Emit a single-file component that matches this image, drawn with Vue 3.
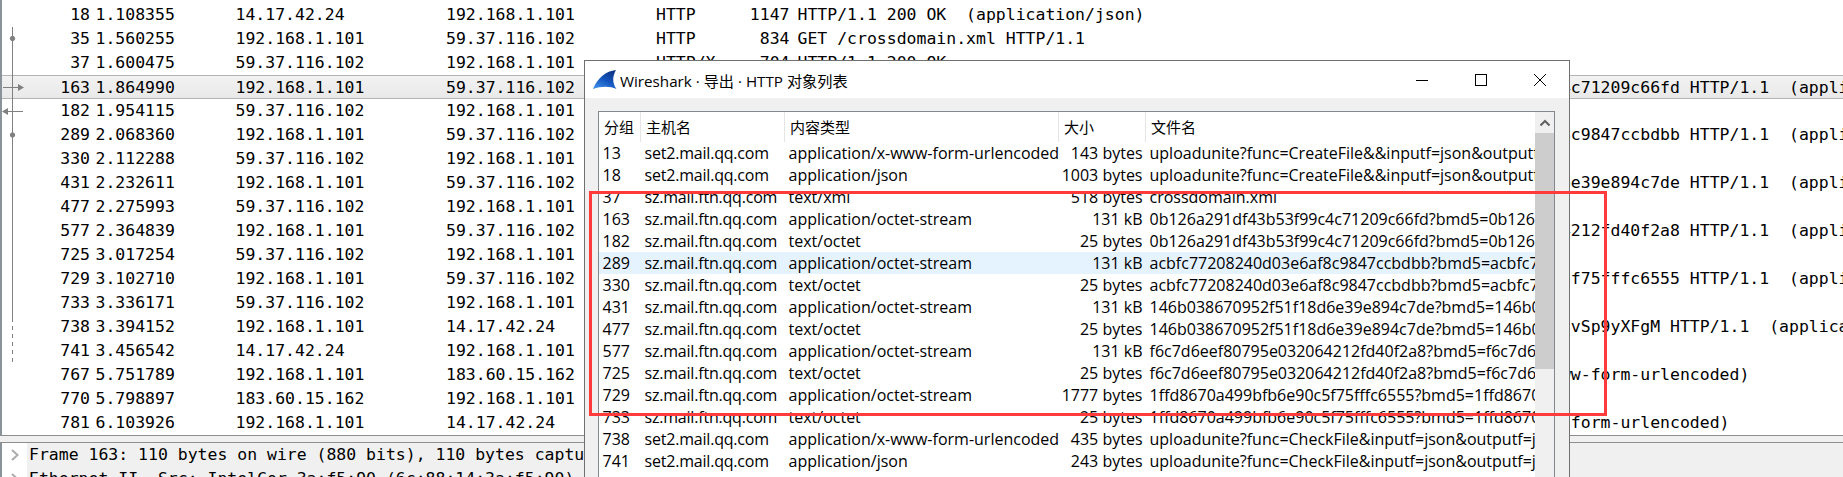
<script setup>
const OCT = '  (application/octet-stream)'
const post = (hash, n = 89) => ('POST /ftn_handler/'.padEnd(n - hash.length, ' ') + hash + ' HTTP/1.1' + OCT)
const ok = 'HTTP/1.1 200 OK'
const A = '192.168.1.101'
const Q = '59.37.116.102'
const T = '14.17.42.24'
const C = '183.60.15.162'
const packets = [
  { no: 18, t: '1.108355', s: T, d: A, p: 'HTTP', l: 1147, i: ok + '  (application/json)' },
  { no: 35, t: '1.560255', s: A, d: Q, p: 'HTTP', l: 834, i: 'GET /crossdomain.xml HTTP/1.1' },
  { no: 37, t: '1.600475', s: Q, d: A, p: 'HTTP/X', l: 704, i: ok },
  { no: 163, t: '1.864990', s: A, d: Q, p: 'HTTP', l: 110, i: post('0b126a291df43b53f99c4c71209c66fd'), sel: true },
  { no: 182, t: '1.954115', s: Q, d: A, p: 'HTTP', l: 350, i: ok },
  { no: 289, t: '2.068360', s: A, d: Q, p: 'HTTP', l: 110, i: post('acbfc77208240d03e6af8c9847ccbdbb') },
  { no: 330, t: '2.112288', s: Q, d: A, p: 'HTTP', l: 350, i: ok },
  { no: 431, t: '2.232611', s: A, d: Q, p: 'HTTP', l: 110, i: post('146b038670952f51f18d6e39e894c7de') },
  { no: 477, t: '2.275993', s: Q, d: A, p: 'HTTP', l: 350, i: ok },
  { no: 577, t: '2.364839', s: A, d: Q, p: 'HTTP', l: 110, i: post('f6c7d6eef80795e032064212fd40f2a8') },
  { no: 725, t: '3.017254', s: Q, d: A, p: 'HTTP', l: 350, i: ok },
  { no: 729, t: '3.102710', s: A, d: Q, p: 'HTTP', l: 110, i: post('1ffd8670a499bfb6e90c5f75fffc6555') },
  { no: 733, t: '3.336171', s: Q, d: A, p: 'HTTP', l: 350, i: ok },
  { no: 738, t: '3.394152', s: A, d: T, p: 'HTTP', l: 650, i: post('vSp9yXFgM', 87).replace('octet-stream', 'json') },
  { no: 741, t: '3.456542', s: T, d: A, p: 'HTTP', l: 400, i: ok },
  { no: 767, t: '5.751789', s: A, d: C, p: 'HTTP', l: 600, i: 'POST /cgi-bin/upload HTTP/1.1  (application/x-www-form-urlencoded)'.padStart(96, ' ') },
  { no: 770, t: '5.798897', s: C, d: A, p: 'HTTP', l: 400, i: ok },
  { no: 781, t: '6.103926', s: A, d: T, p: 'HTTP', l: 700, i: 'POST /cgi-bin/upload HTTP/1.1  (application/x-www-form-urlencoded)'.padStart(94, ' ') }
]

const SET = 'set2.mail.qq.com'
const FTN = 'sz.mail.ftn.qq.com'
const OS = 'application/octet-stream'
const TO = 'text/octet'
const FORM = 'application/x-www-form-urlencoded'
const JSONT = 'application/json'
const file = (h) => `${h}?bmd5=${h}`
const objects = [
  { no: 13, h: SET, c: FORM, z: '143 bytes', f: 'uploadunite?func=CreateFile&&inputf=json&outputf=json&sid=a' },
  { no: 18, h: SET, c: JSONT, z: '1003 bytes', f: 'uploadunite?func=CreateFile&&inputf=json&outputf=json&sid=a' },
  { no: 37, h: FTN, c: 'text/xml', z: '518 bytes', f: 'crossdomain.xml' },
  { no: 163, h: FTN, c: OS, z: '131 kB', f: file('0b126a291df43b53f99c4c71209c66fd') },
  { no: 182, h: FTN, c: TO, z: '25 bytes', f: file('0b126a291df43b53f99c4c71209c66fd') },
  { no: 289, h: FTN, c: OS, z: '131 kB', f: file('acbfc77208240d03e6af8c9847ccbdbb'), sel: true },
  { no: 330, h: FTN, c: TO, z: '25 bytes', f: file('acbfc77208240d03e6af8c9847ccbdbb') },
  { no: 431, h: FTN, c: OS, z: '131 kB', f: file('146b038670952f51f18d6e39e894c7de') },
  { no: 477, h: FTN, c: TO, z: '25 bytes', f: file('146b038670952f51f18d6e39e894c7de') },
  { no: 577, h: FTN, c: OS, z: '131 kB', f: file('f6c7d6eef80795e032064212fd40f2a8') },
  { no: 725, h: FTN, c: TO, z: '25 bytes', f: file('f6c7d6eef80795e032064212fd40f2a8') },
  { no: 729, h: FTN, c: OS, z: '1777 bytes', f: file('1ffd8670a499bfb6e90c5f75fffc6555') },
  { no: 733, h: FTN, c: TO, z: '25 bytes', f: file('1ffd8670a499bfb6e90c5f75fffc6555') },
  { no: 738, h: SET, c: FORM, z: '435 bytes', f: 'uploadunite?func=CheckFile&inputf=json&outputf=json&sid=a' },
  { no: 741, h: SET, c: JSONT, z: '243 bytes', f: 'uploadunite?func=CheckFile&inputf=json&outputf=json&sid=a' },
  { no: 767, h: 'dns.mail.qq.com', c: FORM, z: '334 bytes', f: 'uploadunite?func=CheckFile&inputf=json&outputf=json&sid=a' }
]
</script>

<template>
  <div class="screen">
    <section class="packets">
      <div v-for="p in packets" :key="p.no" class="packet" :class="{ current: p.sel }">
        <span class="pno">{{ p.no }}</span>
        <span>{{ p.t }}</span>
        <span>{{ p.s }}</span>
        <span>{{ p.d }}</span>
        <span>{{ p.p }}</span>
        <span class="plen">{{ p.l }}</span>
        <span class="pinfo">{{ p.i }}</span>
      </div>
      <svg class="related" width="30" height="435" viewBox="0 0 30 435">
        <g stroke="#808080" fill="#808080" stroke-width="1">
          <line x1="12.5" y1="27" x2="12.5" y2="318" />
          <line x1="12.5" y1="318" x2="12.5" y2="363" stroke-dasharray="4 4" />
          <circle cx="12.5" cy="38.5" r="2.2" />
          <circle cx="12.5" cy="135" r="2.2" />
          <line x1="3" y1="87.5" x2="18" y2="87.5" />
          <path d="M18 84 L24 87.5 L18 91 Z" stroke="none" />
          <line x1="8" y1="111.5" x2="23" y2="111.5" />
          <path d="M8 108 L2 111.5 L8 115 Z" stroke="none" />
        </g>
      </svg>
    </section>
    <div class="splitter"></div>
    <section class="details">
      <div class="detail"><svg class="chev" width="8" height="12" viewBox="0 0 8 12"><path d="M1 1 L6.5 6 L1 11" /></svg><span class="dtext">Frame 163: 110 bytes on wire (880 bits), 110 bytes captured (880 bits) on interface 0</span></div>
      <div class="detail"><svg class="chev" width="8" height="12" viewBox="0 0 8 12"><path d="M1 1 L6.5 6 L1 11" /></svg><span class="dtext">Ethernet II, Src: IntelCor_3a:f5:90 (6c:88:14:3a:f5:90), Dst: Tp-LinkT_1c:2d:3e</span></div>
    </section>

    <div class="dialog">
      <header class="titlebar">
        <svg class="shark" width="24" height="20" viewBox="0 0 24 20">
          <defs>
            <linearGradient id="fin" x1="0.9" y1="0" x2="0.25" y2="1">
              <stop offset="0" stop-color="#0b2f7e" />
              <stop offset="0.55" stop-color="#1456bf" />
              <stop offset="1" stop-color="#3b8be6" />
            </linearGradient>
          </defs>
          <path d="M23 0 C13 1 4.500 8 0 19 C8 16 17 16 23.500 19 C19 13 19.500 6 23 0 Z" fill="url(#fin)" />
        </svg>
        <span class="title">Wireshark · 导出 · HTTP 对象列表</span>
        <div class="controls">
          <span class="ctl"><svg width="14" height="14" viewBox="0 0 14 14"><path d="M1 7.500 H13" /></svg></span>
          <span class="ctl"><svg width="14" height="14" viewBox="0 0 14 14"><rect x="1.500" y="1.500" width="11" height="11" /></svg></span>
          <span class="ctl"><svg width="14" height="14" viewBox="0 0 14 14"><path d="M1 1 L13 13 M13 1 L1 13" /></svg></span>
        </div>
      </header>
      <div class="dialog-body">
        <div class="table">
          <div class="table-main">
            <div class="thead">
              <span class="c1">分组</span>
              <span class="c2">主机名</span>
              <span class="c3">内容类型</span>
              <span class="c4">大小</span>
              <span class="c5">文件名</span>
            </div>
            <div v-for="o in objects" :key="o.no" class="trow" :class="{ picked: o.sel }">
              <span class="c1">{{ o.no }}</span>
              <span class="c2">{{ o.h }}</span>
              <span class="c3">{{ o.c }}</span>
              <span class="c4 right">{{ o.z }}</span>
              <span class="c5">{{ o.f }}</span>
            </div>
          </div>
          <div class="scrollbar">
            <div class="sb-up"><svg width="12" height="8" viewBox="0 0 12 8"><path d="M1.500 6.500 L6 2 L10.500 6.500" /></svg></div>
            <div class="sb-thumb"></div>
          </div>
        </div>
      </div>
    </div>

    <div class="annotation"></div>
  </div>
</template>

<style scoped>
.screen {
  position: relative;
  width: 1843px;
  height: 477px;
  overflow: hidden;
  background: #fff;
  font-family: "DejaVu Sans Mono", monospace;
  font-size: 16.48px;
  color: #000;
}
.packets {
  position: relative;
  height: 432px;
  padding-top: 3px;
  border-left: 2px solid #8a929a;
}
.packet {
  display: grid;
  grid-template-columns: 88px 140px 210px 209.5px 65px 75px 1fr;
  column-gap: 0;
  height: 24px;
  line-height: 24px;
  white-space: pre;
  box-sizing: border-box;
}
.packet span:nth-child(2) {
  padding-left: 5.500px;
}
.packet span:nth-child(3) {
  margin-left: 5.500px;
}
.packet span:nth-child(4) {
  margin-left: 6px;
}
.packet span:nth-child(5),
.packet span:nth-child(6),
.packet span:nth-child(7) {
  margin-left: 6.500px;
}
.pno,
.plen {
  text-align: right;
}
.pinfo {
  padding-left: 1.500px;
  overflow: visible;
}
.current {
  background: linear-gradient(#f2f2f2, #e9e9e9);
  border-top: 1px solid #b4b4b4;
  border-bottom: 1px solid #b4b4b4;
  line-height: 24px;
}
.related {
  position: absolute;
  left: -2px;
  top: 0;
}
.splitter {
  background: #f0f0f0;
  border-top: 1px solid #8e8e8e;
  border-bottom: 1px solid #8e8e8e;
  box-sizing: border-box;
  height: 8px;
}
.details {
  border-left: 2px solid #8a929a;
}
.detail {
  display: flex;
  align-items: center;
  height: 24px;
  white-space: pre;
}
.chev {
  flex: none;
  margin: 0 8px 0 9px;
  width: 8px;
}
.chev path {
  fill: none;
  stroke: #ababab;
  stroke-width: 2;
}
.dtext {
  flex: 1;
  padding-left: 2px;
  line-height: 24px;
  background: #f0f0f0;
}
.dialog {
  position: absolute;
  left: 584px;
  top: 60px;
  width: 986px;
  height: 440px;
  box-sizing: border-box;
  background: #f0f0f0;
  border: 1px solid #707070;
  font-family: "Open Sans", "Noto Sans CJK SC", sans-serif;
  font-size: 16px;
}
.titlebar {
  display: flex;
  align-items: center;
  height: 37px;
  background: #fff;
}
.shark {
  flex: none;
  margin-left: 8px;
}
.title {
  margin-left: 3px;
  flex: 1;
  font-size: 15.2px;
}
.controls {
  display: flex;
}
.ctl {
  width: 59px;
  height: 37px;
  display: flex;
  align-items: center;
  justify-content: center;
}
.ctl svg {
  fill: none;
  stroke: #000;
  stroke-width: 1;
}
.dialog-body {
  padding: 13px 14px 0 13px;
}
.table {
  display: flex;
  height: 400px;
  background: #fff;
  border: 1px solid #828790;
  box-sizing: border-box;
}
.table-main {
  width: 936px;
  overflow: hidden;
}
.thead,
.trow {
  display: flex;
  white-space: nowrap;
}
.thead {
  height: 30px;
  line-height: 30px;
  font-size: 15px;
}
.thead span {
  border-right: 1px solid #e5e5e5;
  padding-left: 5px;
}
.thead .c5 {
  border-right: 0;
}
.trow {
  height: 22px;
  line-height: 23px;
}
.trow span {
  padding-left: 3.500px;
  overflow: hidden;
}
.trow .c2 {
  letter-spacing: -0.2px;
}
.c1 {
  width: 42px;
}
.c2 {
  width: 144px;
}
.c3 {
  width: 274px;
}
.c4 {
  width: 87px;
}
.c5 {
  flex: 1;
  min-width: 0;
}
.thead span,
.trow span {
  box-sizing: border-box;
}
.trow .right {
  text-align: right;
  padding: 0 3.500px 0 0;
}
.picked {
  background: #e5f3ff;
}
.scrollbar {
  width: 19px;
  flex: none;
  background: #f0f0f0;
}
.sb-up {
  height: 21px;
  display: flex;
  align-items: center;
  justify-content: center;
}
.sb-up svg {
  fill: none;
  stroke: #606060;
  stroke-width: 2;
}
.sb-thumb {
  height: 236px;
  background: #cdcdcd;
}
.annotation {
  position: absolute;
  left: 589px;
  top: 191px;
  width: 1018px;
  height: 225px;
  box-sizing: border-box;
  border: 3px solid #ff3b3b;
}
</style>
